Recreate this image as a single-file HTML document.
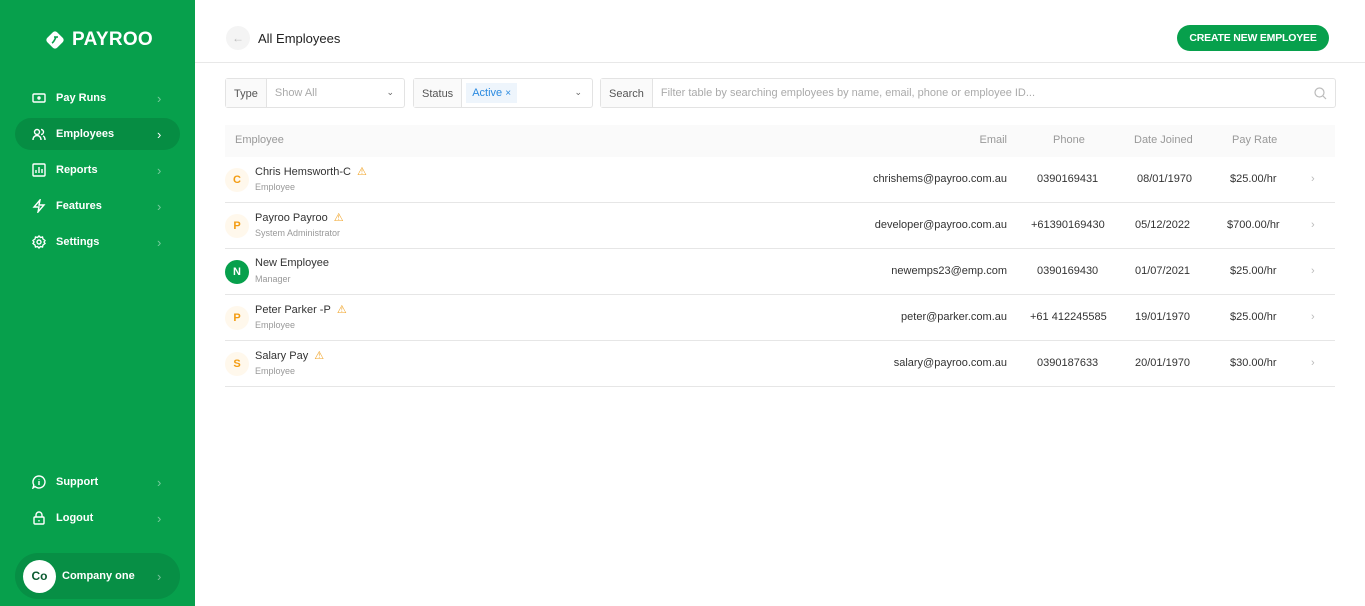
<!DOCTYPE html>
<html><head><meta charset="utf-8"><style>
*{box-sizing:border-box;margin:0;padding:0}
body{width:1365px;height:606px;overflow:hidden;font-family:"Liberation Sans",sans-serif;background:#fff;position:relative;color:#333}
.sb{position:absolute;left:0;top:0;width:195px;height:606px;background:#07a04c}
.logo{position:absolute;left:44px;top:29px;display:flex;align-items:center;color:#fff;font-weight:bold;font-size:19px;letter-spacing:.3px}
.nav{position:absolute;left:15px;width:165px;height:32px;border-radius:16px;display:flex;align-items:center;color:#fff;font-size:11px;font-weight:bold}
.nav svg{position:absolute;left:17px}
.nav span{position:absolute;left:41px;top:10px}
.nav i{position:absolute;left:142px;font-style:normal;color:rgba(255,255,255,.45);font-size:13px;font-weight:normal}
.act{background:#068d43}
.act i{color:#fff}
.hd{position:absolute;left:195px;top:62px;width:1170px;height:1px;background:#e8e8e8}
.back{position:absolute;left:226px;top:26px;width:24px;height:24px;border-radius:50%;background:#f4f4f4;color:#bbb;font-size:12px;text-align:center;line-height:24px}
.title{position:absolute;left:258px;top:31px;font-size:13px;color:#222}
.btn{position:absolute;left:1177px;top:25px;width:152px;height:26px;border-radius:13px;background:#07a04c;color:#fff;font-size:10.5px;font-weight:bold;text-align:center;line-height:26px;letter-spacing:-.2px}
.f{position:absolute;top:78px;height:30px;border:1px solid #e3e3e3;border-radius:3px;font-size:11px;display:flex}
.f .l{background:#fafafa;border-right:1px solid #e3e3e3;padding:0 8px;line-height:30px;color:#555}
.ph{color:#aaa;padding:8px 8px;}
.th{position:absolute;left:225px;top:125px;width:1110px;height:32px;background:#fafafa;font-size:11px;color:#999}
.r{position:absolute;left:225px;width:1110px;height:46px;border-bottom:1px solid #e6e6e6;font-size:11px;color:#333}
.av{position:absolute;left:0;top:11px;width:24px;height:24px;border-radius:50%;background:#fff8ec;color:#f39c12;font-weight:bold;font-size:11px;text-align:center;line-height:24px}
.nm{position:absolute;left:30px;top:8px;font-size:11px;color:#333}
.rl{position:absolute;left:30px;top:25px;font-size:9px;color:#999}
.c{position:absolute;top:16px}
.w{color:#f0a020;font-size:11px;margin-left:6px}
</style></head><body>
<div class="sb">
<div class="logo"><svg width="22" height="22" viewBox="0 0 22 22"><rect x="4" y="4" width="14" height="14" rx="3" transform="rotate(45 11 11)" fill="#fff"/><path d="M8 14c2-1 3-4 4-6M10 8h4" stroke="#07a04c" stroke-width="1.6" fill="none"/></svg><span style="margin-left:6px">PAYROO</span></div>
<div class="nav" style="top:82px"><svg width="14" height="14" viewBox="0 0 14 14" fill="none" stroke="#fff" stroke-width="1.4"><rect x="1" y="3" width="12" height="8" rx="1"/><circle cx="7" cy="7" r="1"/></svg><span>Pay Runs</span><i>›</i></div>
<div class="nav act" style="top:118px"><svg width="14" height="14" viewBox="0 0 14 14" fill="none" stroke="#fff" stroke-width="1.4"><circle cx="5" cy="5" r="2.5"/><path d="M1 13c0-3 2-4.5 4-4.5s4 1.5 4 4.5M9 2.5a2.5 2.5 0 0 1 0 5M11 9c1.5.5 2 2 2 4"/></svg><span>Employees</span><i>›</i></div>
<div class="nav" style="top:154px"><svg width="14" height="14" viewBox="0 0 14 14" fill="none" stroke="#fff" stroke-width="1.4"><rect x="1" y="1" width="12" height="12" rx="1"/><path d="M4 10V7M7 10V4M10 10V6"/></svg><span>Reports</span><i>›</i></div>
<div class="nav" style="top:190px"><svg width="14" height="14" viewBox="0 0 14 14" fill="none" stroke="#fff" stroke-width="1.4"><path d="M8 1L2 8h5l-1 5 6-7H7z"/></svg><span>Features</span><i>›</i></div>
<div class="nav" style="top:226px"><svg width="14" height="14" viewBox="0 0 14 14" fill="none" stroke="#fff" stroke-width="1.4"><circle cx="7" cy="7" r="2"/><path d="M7 1l1.5 1.5 2-.5.5 2L13 5.5 12 7l1 1.5-2 1.5-.5 2-2-.5L7 13l-1.5-1.5-2 .5-.5-2L1 8.5 2 7 1 5.5 3 4l.5-2 2 .5z"/></svg><span>Settings</span><i>›</i></div>
<div class="nav" style="top:466px"><svg width="14" height="14" viewBox="0 0 14 14" fill="none" stroke="#fff" stroke-width="1.4"><path d="M7 1a6 6 0 1 1-4 10.5L1 13l.8-3A6 6 0 0 1 7 1z"/><path d="M7 6v4M7 4v.5"/></svg><span>Support</span><i>›</i></div>
<div class="nav" style="top:502px"><svg width="14" height="14" viewBox="0 0 14 14" fill="none" stroke="#fff" stroke-width="1.4"><rect x="2" y="6" width="10" height="7" rx="1"/><path d="M4 6V4a3 3 0 0 1 6 0v2M7 9v1.5"/></svg><span>Logout</span><i>›</i></div>
<div class="nav act" style="top:553px;height:46px;border-radius:23px;left:15px;width:165px;background:#078f45"><div style="position:absolute;left:8px;width:33px;height:33px;border-radius:50%;background:#fff;font-size:12px;text-align:center;line-height:33px;color:#0a5a30">Co</div><span style="left:47px;top:17px;font-size:11px">Company one</span><i style="color:rgba(255,255,255,.45)">›</i></div>
</div>
<div class="back">←</div><div class="title">All Employees</div>
<div class="btn">CREATE NEW EMPLOYEE</div>
<div class="hd"></div>
<div class="f" style="left:225px;width:180px"><div class="l">Type</div><div class="ph">Show All</div><div style="position:absolute;right:10px;top:8px;color:#666;font-size:9px">⌄</div></div>
<div class="f" style="left:413px;width:180px"><div class="l">Status</div><div style="margin:4px;background:#eef5fc;color:#2a8ae0;padding:4px 6px;height:20px">Active <span style="font-size:10px">×</span></div><div style="position:absolute;right:10px;top:8px;color:#666;font-size:9px">⌄</div></div>
<div class="f" style="left:600px;width:736px"><div class="l">Search</div><div class="ph">Filter table by searching employees by name, email, phone or employee ID...</div><svg style="position:absolute;right:8px;top:8px" width="13" height="13" viewBox="0 0 13 13" fill="none" stroke="#bbb" stroke-width="1.2"><circle cx="5.5" cy="5.5" r="4.5"/><path d="M9 9l3 3"/></svg></div>
<div class="th"><span class="c" style="left:10px;top:9px">Employee</span><span class="c" style="right:328px;top:9px">Email</span><span class="c" style="left:828px;top:9px">Phone</span><span class="c" style="left:909px;top:9px">Date Joined</span><span class="c" style="left:1007px;top:9px">Pay Rate</span></div>
<div class="r" style="top:157px"><div class="av">C</div><div class="nm">Chris Hemsworth-C<span class="w">⚠</span></div><div class="rl">Employee</div><span class="c" style="right:328px">chrishems@payroo.com.au</span><span class="c" style="left:812px">0390169431</span><span class="c" style="left:912px">08/01/1970</span><span class="c" style="left:1005px">$25.00/hr</span><span class="c" style="left:1086px;color:#bbb">›</span></div>
<div class="r" style="top:203px"><div class="av">P</div><div class="nm">Payroo Payroo<span class="w">⚠</span></div><div class="rl">System Administrator</div><span class="c" style="right:328px">developer@payroo.com.au</span><span class="c" style="left:806px">+61390169430</span><span class="c" style="left:910px">05/12/2022</span><span class="c" style="left:1002px">$700.00/hr</span><span class="c" style="left:1086px;color:#bbb">›</span></div>
<div class="r" style="top:249px"><div class="av" style="background:#07a04c;color:#fff">N</div><div class="nm">New Employee</div><div class="rl">Manager</div><span class="c" style="right:328px">newemps23@emp.com</span><span class="c" style="left:812px">0390169430</span><span class="c" style="left:910px">01/07/2021</span><span class="c" style="left:1005px">$25.00/hr</span><span class="c" style="left:1086px;color:#bbb">›</span></div>
<div class="r" style="top:295px"><div class="av">P</div><div class="nm">Peter Parker -P<span class="w">⚠</span></div><div class="rl">Employee</div><span class="c" style="right:328px">peter@parker.com.au</span><span class="c" style="left:805px">+61 412245585</span><span class="c" style="left:910px">19/01/1970</span><span class="c" style="left:1005px">$25.00/hr</span><span class="c" style="left:1086px;color:#bbb">›</span></div>
<div class="r" style="top:341px"><div class="av">S</div><div class="nm">Salary Pay<span class="w">⚠</span></div><div class="rl">Employee</div><span class="c" style="right:328px">salary@payroo.com.au</span><span class="c" style="left:812px">0390187633</span><span class="c" style="left:910px">20/01/1970</span><span class="c" style="left:1005px">$30.00/hr</span><span class="c" style="left:1086px;color:#bbb">›</span></div>
</body></html>
